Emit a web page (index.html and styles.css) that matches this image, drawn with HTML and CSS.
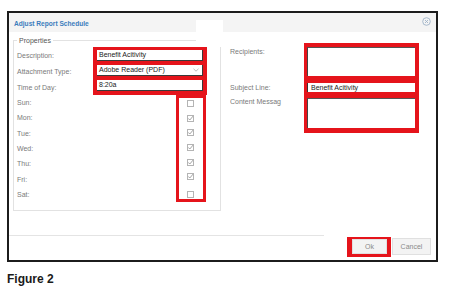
FILE: index.html
```html
<!DOCTYPE html>
<html lang="en">

<head>
    <meta charset="UTF-8">
    <title>Adjust Report Schedule</title>
    <link rel="stylesheet" href="styles.css">
</head>

<body>
    <div class="page">
        <div class="dialog">
            <div class="titlebar">
                <span class="title">Adjust Report Schedule</span>
                <svg class="close" width="9" height="9" viewBox="0 0 9 9">
                    <circle cx="4.5" cy="4.5" r="3.8" fill="none" stroke="#9fb3c8" stroke-width="0.9"/>
                    <path d="M3 3 L6 6 M6 3 L3 6" stroke="#9fb3c8" stroke-width="0.9"/>
                </svg>
            </div>

            <div class="body">
                <fieldset class="props">
                    <legend>Properties</legend>
                    <div class="props-grid">
                        <div class="mark mark-fields">
                            <div class="field">Benefit Acitivity</div>
                            <div class="field select">Adobe Reader (PDF)
                                <svg class="chevron" width="6" height="4" viewBox="0 0 6 4">
                                    <path d="M0.5 0.8 L3 3.2 L5.5 0.8" fill="none" stroke="#aaa" stroke-width="0.8"/>
                                </svg>
                            </div>
                            <div class="field">8:20a</div>
                        </div>
                        <div class="mark-days">
                            <div class="day"><span class="box"></span></div>
                            <div class="day"><span class="box checked"></span></div>
                            <div class="day"><span class="box checked"></span></div>
                            <div class="day"><span class="box checked"></span></div>
                            <div class="day"><span class="box checked"></span></div>
                            <div class="day"><span class="box checked"></span></div>
                            <div class="day"><span class="box"></span></div>
                        </div>

                        <span class="lbl">Description:</span>
                        <span class="lbl">Attachment Type:</span>
                        <span class="lbl">Time of Day:</span>
                        <span class="lbl">Sun:</span>
                        <span class="lbl">Mon:</span>
                        <span class="lbl">Tue:</span>
                        <span class="lbl">Wed:</span>
                        <span class="lbl">Thu:</span>
                        <span class="lbl">Fri:</span>
                        <span class="lbl">Sat:</span>
                    </div>
                </fieldset>

                <div class="mail">
                    <span class="lbl lbl-top">Recipients:</span>
                    <div class="mark mark-recipients"><div class="area"></div></div>

                    <span class="lbl">Subject Line:</span>
                    <div class="mark mark-subject"><div class="line">Benefit Acitivity</div></div>

                    <span class="lbl lbl-content">Content Messag</span>
                    <div class="mark mark-content"><div class="area"></div></div>
                </div>
            </div>

            <div class="footer">
                <div class="rule"></div>
                <div class="mark mark-ok"><button class="btn">Ok</button></div>
                <button class="btn btn-cancel">Cancel</button>
            </div>

            <div class="patch"></div>
        </div>

        <p class="caption">Figure 2</p>
    </div>
</body>

</html>
```

FILE: styles.css
```css
/* General */
body {
    margin: 0;
    background-color: white;
    font-family: "Liberation Sans", Arial, sans-serif;
}

.page {
    padding: 11px 0 0 7px;
}

/* Dialog frame */
.dialog {
    position: relative;
    width: 427px;
    height: 247px;
    border: 2px solid #1c1c1c;
    background-color: white;
}

.titlebar {
    height: 19px;
    background-color: #f4f4f4;
    display: flex;
    align-items: center;
    justify-content: space-between;
    padding: 0 5px 0 5px;
}

.title {
    font-size: 6.6px;
    font-weight: bold;
    color: #3b7cbc;
    padding-top: 1px;
}

.close {
    margin-bottom: 3px;
}

.body {
    height: 203px;
    display: flex;
    align-items: flex-start;
}

.lbl {
    font-size: 7px;
    line-height: 9px;
    color: #7a7a7a;
    align-self: center;
    white-space: nowrap;
}

/* Red highlight marks */
.mark {
    background-color: #e5141b;
}

/* Properties */
.props {
    margin: 4px 0 0 4px;
    padding: 2px 13px 8px 3px;
    border: 1px solid #e2e2e2;
    width: 190px;
}

.props legend {
    font-size: 7px;
    line-height: 9px;
    color: #555;
    padding: 0 2px;
    margin-left: 0;
}

.props-grid {
    display: grid;
    grid-template-columns: 76px 114px;
    grid-template-rows: repeat(3, 16px) repeat(7, 15.3px);
}

.props-grid .lbl {
    grid-column: 1;
}

.mark-fields {
    grid-column: 2;
    grid-row: 1 / 4;
    display: flex;
    flex-direction: column;
    gap: 4px;
    padding: 3px 4px 4px 4px;
}

.field {
    height: 11px;
    background-color: white;
    border-right: 1px solid #3a3a3a;
    border-bottom: 1px solid #3a3a3a;
    box-sizing: border-box;
    font-size: 7px;
    line-height: 10px;
    color: #222;
    padding-left: 2px;
    display: flex;
    align-items: center;
    justify-content: space-between;
}

.chevron {
    margin-right: 3px;
}

.mark-days {
    grid-column: 2;
    grid-row: 4 / 11;
    justify-self: end;
    width: 30px;
    background-color: white;
    outline: 3px solid #e5141b;
    outline-offset: -3px;
    display: flex;
    flex-direction: column;
    margin-right: 1px;
}

.day {
    height: 15.3px;
    display: flex;
    align-items: center;
    justify-content: center;
    padding-right: 2px;
}

.day:first-child {
    padding-top: 1px;
}

.day:last-child {
    padding-top: 3px;
}

.box {
    width: 7px;
    height: 7px;
    border: 1px solid #b4b4b4;
    box-sizing: border-box;
    background-color: white;
}

.box.checked {
    background: white url("data:image/svg+xml,%3Csvg xmlns='http://www.w3.org/2000/svg' viewBox='0 0 7 7'%3E%3Cpath d='M1.2 3.4 L2.8 5 L6.2 1' fill='none' stroke='%23999' stroke-width='0.9'/%3E%3C/svg%3E") no-repeat center / 7px 7px;
}

/* Mail panel */
.mail {
    margin: 11px 0 0 9px;
    display: grid;
    grid-template-columns: 74px 115px;
    grid-template-rows: 37px 15px 38px;
}

.lbl-top {
    align-self: start;
    padding-top: 4px;
}

.lbl-content {
    align-self: start;
    padding-top: 2px;
    width: 66px;
    overflow: hidden;
}

.mark-recipients {
    padding: 4px 4px 4px 3px;
}

.mark-subject {
    padding: 3px 4px 3px 3px;
}

.mark-content {
    padding: 3px 4px 5px 3px;
}

.area {
    height: 100%;
    background-color: white;
    border-left: 1px solid #444;
    border-top: 1px solid #555;
    box-sizing: border-box;
}

.line {
    height: 9px;
    background-color: white;
    border-left: 1px solid #333;
    box-sizing: border-box;
    font-size: 7px;
    line-height: 9px;
    color: #222;
    padding-left: 3px;
}

/* Footer */
.footer {
    height: 25px;
    display: flex;
    align-items: flex-start;
    gap: 1px;
    padding-right: 5px;
}

.rule {
    flex: 1;
    border-top: 1px solid #e4e4e4;
    margin-right: 22px;
}

.btn {
    font-family: "Liberation Sans", Arial, sans-serif;
    font-size: 7px;
    color: #8a8a8a;
    background-color: #f3f3f3;
    border: 1px solid #e0e0e0;
    padding: 0;
    margin: 0;
}

.mark-ok {
    margin-top: 2px;
    padding: 2px 4px 3px 5px;
}

.mark-ok .btn {
    width: 35px;
    height: 15px;
    display: block;
}

.btn-cancel {
    width: 39px;
    height: 17px;
    margin-top: 3px;
}

/* White patch over the title bar */
.patch {
    position: absolute;
    left: 187px;
    top: 7px;
    width: 27px;
    height: 27px;
    background-color: white;
}

.caption {
    margin: 10px 0 0 0;
    font-size: 12px;
    line-height: 14px;
    font-weight: bold;
    color: #1a1a1a;
}
```
